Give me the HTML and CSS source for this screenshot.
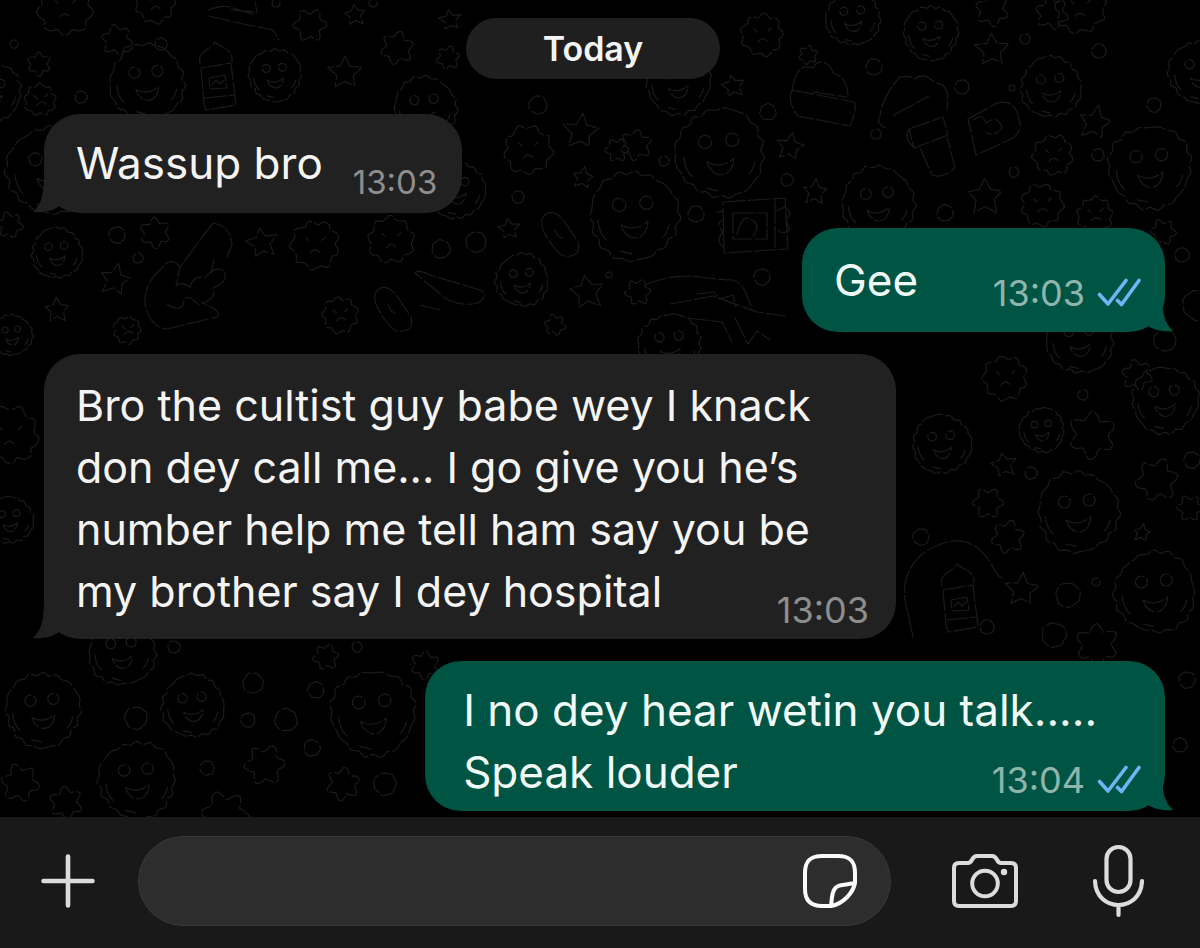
FILE: index.html
```html
<!DOCTYPE html>
<html lang="en">
<head>
  <meta charset="utf-8">
  <meta name="viewport" content="width=device-width, initial-scale=1">
  <title>Chat</title>
  <link rel="stylesheet" href="styles.css">
</head>
<body>
  <svg class="sprite" aria-hidden="true">
    <symbol id="tail" viewBox="0 0 34 40">
      <path d="M11 0C11 20 9 31 0 39C10 40 20 38 26 33L34 28V0Z"/>
    </symbol>
    <symbol id="ticks" viewBox="0 0 44 30">
      <path d="M2.500 16.500L11 26L29 2.500M20.500 22.500L24.500 26.500L42 2.500" fill="none" stroke="currentColor" stroke-width="3.600" stroke-linecap="round" stroke-linejoin="round"/>
    </symbol>
  </svg>

  <main class="chat">
    <svg class="wallpaper" viewBox="0 0 1200 817" preserveAspectRatio="xMidYMin slice" aria-hidden="true"></svg>

    <div class="day">Today</div>

    <article class="bubble bubble--in bubble--short">
      <p class="text">Wassup bro <span class="meta meta--small"><time>13:03</time></span></p>
      <svg class="tail" aria-hidden="true"><use href="#tail"/></svg>
    </article>

    <article class="bubble bubble--out bubble--reply">
      <p class="text">Gee <span class="meta"><time>13:03</time><svg class="ticks" role="img" aria-label="Read"><use href="#ticks"/></svg></span></p>
      <svg class="tail" aria-hidden="true"><use href="#tail"/></svg>
    </article>

    <article class="bubble bubble--in bubble--long">
      <p class="text">Bro the cultist guy babe wey I knack don dey call me... I go give you he’s number help me tell ham say you be my brother say I dey hospital <span class="meta"><time>13:03</time></span></p>
      <svg class="tail" aria-hidden="true"><use href="#tail"/></svg>
    </article>

    <article class="bubble bubble--out bubble--last">
      <p class="text">I no dey hear wetin you talk.....<br>Speak louder <span class="meta"><time>13:04</time><svg class="ticks" role="img" aria-label="Read"><use href="#ticks"/></svg></span></p>
      <svg class="tail" aria-hidden="true"><use href="#tail"/></svg>
    </article>
  </main>

  <form class="composer">
    <button class="icon-button" type="button" aria-label="Attach">
      <svg width="56" height="56" viewBox="0 0 56 56" stroke-width="4.600"><path d="M28 3.500V52.500M3.500 28H52.500"/></svg>
    </button>
    <div class="field">
      <input class="field-input" type="text" aria-label="Message">
      <button class="icon-button icon-button--bright" type="button" aria-label="Stickers">
        <svg width="56" height="56" viewBox="0 0 56 56" stroke-width="4"><path d="M29 53H20C8 53 3 47 3 36V20C3 8 8 3 20 3H36C48 3 53 8 53 20V30C51 40 41 51 29 53C30 46 29.500 42 32 37C35 31 43 32 53 30"/></svg>
      </button>
    </div>
    <button class="icon-button" type="button" aria-label="Camera">
      <svg width="68" height="58" viewBox="0 0 68 58" stroke-width="4"><path d="M8 11H17C22 11 20 4 26 4H41C47 4 45 11 50 11H60Q65 11 65 16V49Q65 54 60 54H8Q3 54 3 49V16Q3 11 8 11Z"/><circle cx="34" cy="31.500" r="12.800"/><circle class="dot" cx="53" cy="20" r="3.200"/></svg>
    </button>
    <button class="icon-button" type="button" aria-label="Record voice message">
      <svg width="52" height="74" viewBox="0 0 52 74" stroke-width="4.200"><rect x="14.500" y="3" width="24" height="45" rx="12"/><path d="M3 37C4 69 49 69 50 37M26.500 61V71"/></svg>
    </button>
  </form>
  <script src="wallpaper.js"></script>
</body>
</html>
```
FILE: styles.css
```css
* { box-sizing: border-box; }

body {
  margin: 0;
  min-height: 100vh;
  display: flex;
  flex-direction: column;
  background: #000;
  color: #f4f4f4;
  font-family: Inter, "Liberation Sans", sans-serif;
}

.sprite { position: absolute; width: 0; height: 0; }

.chat {
  position: relative;
  flex: 1;
  display: flex;
  flex-direction: column;
  align-items: flex-start;
  padding: 18px 35px 6px 44px;
}

.wallpaper {
  position: absolute;
  inset: 0;
  width: 100%;
  height: 100%;
  fill: none;
  stroke: #1b1b1b;
  stroke-width: 1.200;
  stroke-dasharray: 22 3;
  stroke-linecap: round;
  stroke-linejoin: round;
}

.day {
  position: relative;
  align-self: center;
  margin: 0 23px 35px 0;
  padding: 0 77px;
  border-radius: 31px;
  background: #1f1f1f;
  font-size: 34px;
  font-weight: 600;
  line-height: 61px;
}

.bubble {
  position: relative;
  border-radius: 36px;
  font-size: 44px;
  line-height: 62px;
}

.bubble--in { background: #212121; color: #f4f4f4; }
.bubble--out { align-self: flex-end; background: #005444; color: #f0faf7; }

.bubble--short { margin-bottom: 15px; padding: 18px 25px 19px 32px; }
.bubble--reply { width: 363px; margin-bottom: 22px; padding: 21px 24px 21px 32px; }
.bubble--long { width: 76%; margin-bottom: 22px; padding: 20px 27px 17px 32px; font-size: 43px; }
.bubble--last { width: 66%; padding: 18px 24px 8px 38px; }

.text { margin: 0; }

.meta {
  float: right;
  display: flex;
  align-items: center;
  gap: 12px;
  margin-top: 26px;
  font-size: 36px;
  line-height: 36px;
  color: #8e8e8e;
}

.bubble--short .meta,
.bubble--long .meta { margin: 32px 0 -6px 30px; }
.bubble--last .meta { margin-top: 21px; }
.bubble--out .meta { color: #8fb5ac; }
.meta--small { font-size: 33px; }

.ticks { width: 44px; height: 30px; color: #71b4f3; }

.tail {
  position: absolute;
  bottom: 0;
  left: -11px;
  width: 34px;
  height: 40px;
  fill: #212121;
}

.bubble--out .tail {
  left: auto;
  right: -8px;
  fill: #005444;
  transform: scaleX(-1);
}

.composer {
  position: relative;
  display: flex;
  align-items: center;
  padding: 19px 60px 22px 40px;
  background: #191919;
}

.field {
  flex: 1;
  display: flex;
  align-items: center;
  height: 90px;
  margin: 0 60px 0 42px;
  padding: 0 32px;
  border: 1px solid #383838;
  border-radius: 45px;
  background: #2d2d2d;
}

.field-input {
  flex: 1;
  min-width: 0;
  height: 60px;
  border: 0;
  outline: 0;
  background: transparent;
  color: inherit;
  font: inherit;
  font-size: 40px;
}

.icon-button {
  display: flex;
  padding: 0;
  border: 0;
  background: none;
  color: #dcdcdc;
}

.icon-button--bright { color: #fafafa; }

.icon-button svg {
  fill: none;
  stroke: currentColor;
  stroke-linecap: round;
  stroke-linejoin: round;
}

.icon-button .dot { fill: currentColor; stroke: none; }

.composer > .icon-button:last-child { margin-left: 73px; }
```
FILE: wallpaper.js
```js
const svg = document.querySelector(".wallpaper");

function ring(r, bumps, depth, seed) {
  const pts = [];
  for (let i = 0; i <= 72; i++) {
    const a = (i / 72) * Math.PI * 2;
    const k = r * (1 + depth * Math.sin(bumps * a + seed) + 0.03 * Math.sin(3 * a + seed * 2) + 0.02 * Math.sin(19 * a));
    pts.push((Math.cos(a) * k).toFixed(1) + " " + (Math.sin(a) * k).toFixed(1));
  }
  return "M" + pts.join("L");
}

function star(r, seed) {
  const pts = [];
  for (let i = 0; i < 10; i++) {
    const a = (i / 10) * Math.PI * 2 - 1.57 + 0.2 * Math.sin(seed);
    const k = i % 2 ? r * 0.5 : r * (1 + 0.08 * Math.sin(seed + i));
    pts.push((Math.cos(a) * k).toFixed(1) + " " + (Math.sin(a) * k).toFixed(1));
  }
  return "M" + pts.join("L") + "Z";
}

const dot = (x, y, r) => `M${x - r} ${y}a${r} ${r} 0 1 0 ${2 * r} 0a${r} ${r} 0 1 0 ${-2 * r} 0`;

const shapes = {
  face: (r, s) => ring(r, 16, 0.03, s) + dot(-r * 0.34, -r * 0.25, r * 0.15) + dot(r * 0.28, -r * 0.3, r * 0.15) +
    `M${-r * 0.3} ${r * 0.2}Q0 ${r * 0.38} ${r * 0.32} ${r * 0.12}Q${r * 0.28} ${r * 0.5} 0 ${r * 0.5}Q${-r * 0.22} ${r * 0.46} ${-r * 0.3} ${r * 0.2}` +
    `M${-r * 0.82} ${r * 0.1}q${r * 0.03} ${r * 0.3} ${r * 0.2} ${r * 0.45}M${r * 0.8} ${r * 0.2}q${-r * 0.05} ${r * 0.2} ${-r * 0.15} ${r * 0.28}M${-r * 0.3} ${r * 0.8}l${r * 0.25} ${r * 0.06}`,
  cookie: (r, s) => ring(r, 9, 0.09, s) + `M${-r * 0.4} ${-r * 0.3}l3 3M${r * 0.3} ${-r * 0.2}l3 -3M${-r * 0.2} ${r * 0.35}q4 -6 9 -1`,
  flower: (r, s) => ring(r, 6, 0.2, s),
  circle: (r, s) => ring(r, 7, 0.03, s),
  star: (r, s) => star(r, s),
  bottle: () => "M-17 -14C-20 -28 -7 -27 -2 -36C4 -30 16 -30 15 -17M-16 -10L14 -15L19 27Q3 30 -11 32L-13 25ZM-13 20L18 17M-8 0L8 -3L10 10L-7 11ZM-5 7l4 -5l4 4l4 -4",
  cupcake: () => "M-31 -5C-27 -25 -22 -31 -10 -27C-5 -38 8 -32 10 -22Q24 -18 25 0M-31 -5L31 7Q35 12 27 31L-25 21Q-36 8 -31 -5M-10 -3L24 2",
  cone: () => "M-29 3Q-40 -2 -35 -9C-34 -22 -24 -39 -15 -48Q-5 -50 0 -46Q8 -54 20 -42Q36 -42 32 -16M-21 -10L14 -29M-6 4L28 -8L33 10L-1 23ZM5 23L17 50Q27 54 40 43L32 12M-6 4Q-12 14 0 23",
  slice: () => "M-26 -9L3 -25Q21 -30 25 -9Q30 6 13 13L-18 27ZM-20 -8Q-12 -16 -8 -5Q4 -14 8 0Q0 10 -8 4",
  film: () => "M-30 -23L32 -27L35 24L-29 28ZM-20 -12H14V14H-20ZM-16 10q4 -20 13 -16q12 5 3 17M22 -24V22M-36 -12Q-28 -18 -30 -5Q-38 -2 -30 7Q-38 15 -30 22M24 -14q10 -8 13 3q-6 8 0 15q-8 8 -13 -1",
  pill: () => "M-17 -18Q-8 -29 4 -14L18 7Q21 20 10 21Q2 24 -7 11Q-22 -8 -17 -18M-5 -5l3 6l4 2",
  hand: () => "M28 -52Q46 -49 47 -30L42 -18M28 -52Q18 -40 10 -28L-5 -8Q-14 -20 -24 -6Q-44 12 -39 33Q-34 52 -18 54L32 42Q38 36 17 28Q32 24 28 13Q44 7 39 -4Q30 -10 20 3Q9 -1 5 12M5 12Q-4 6 -9 11L-5 -8M-18 29Q-6 37 -2 30Q0 18 8 25L14 30M26 -2L29 -15",
  arc: () => "M-46 72Q-60 30 -30 7Q15 -21 38 22Q41 30 47 33M-46 72l4 20",
  plane: () => "M-35 -22Q-32 -26 -20 -20L30 -5Q40 0 28 8Q10 12 -5 3ZM-30 10l20 5",
  scrap: () => "M-45 4L-2 -4L42 12L70 16M-18 -6l17 -2l5 7l14 -4l3 12M-70 -15Q-40 -28 -8 -22L12 -20Q24 -22 31 -7L37 9M20 18l13 26l9 -13l13 9M-28 18l35 4l10 20",
  curl: () => "M-35 -2Q-20 -8 -10 -4L10 2M-34 4L0 12L30 18L36 28M-12 -2l26 2l-2 -10"
};

const items = {
  face: [[147,82,37],[275,75,26],[57,253,25],[-7,92,28],[425,108,31],[50,170,43],[457,190,28],[720,153,44],[634,216,44],[522,280,26],[678,82,32],[853,18,27],[931,33,27],[1051,87,30],[1150,167,41],[878,203,36],[1200,72,31],[942,444,29],[1042,430,22],[1078,512,40],[1155,592,40],[1165,400,33],[1080,340,33],[43,710,37],[193,706,31],[373,713,42],[122,652,33],[137,780,38],[10,520,23],[670,345,31],[12,335,20]],
  cookie: [[65,8,26],[155,3,19],[391,240,22],[315,245,23],[528,150,23],[762,35,20],[1080,8,24],[1053,155,19],[1042,205,20],[1095,215,17],[340,315,17],[10,435,27],[127,330,13],[40,100,15],[1005,378,21]],
  flower: [[117,40,13],[310,25,14],[397,48,14],[155,233,13],[10,225,11],[638,292,11],[636,145,13],[992,10,14],[1163,232,11],[1157,480,18],[1092,435,20],[1137,375,13],[988,503,13],[1008,537,14],[1097,645,18],[20,783,16],[265,765,17],[343,784,14],[66,803,14],[225,815,20],[326,657,11],[425,665,12],[1052,13,14],[1190,508,11],[448,58,10],[39,64,10],[555,325,9],[617,150,10],[808,55,8]],
  star: [[345,73,17],[115,280,16],[57,310,13],[262,243,16],[581,132,18],[583,178,11],[587,292,18],[509,229,11],[790,147,14],[815,192,13],[733,86,12],[992,50,17],[1095,123,17],[985,197,19],[1004,465,13],[1022,590,17],[1142,533,9],[355,15,11],[450,20,11]],
  circle: [[161,44,6],[14,44,4],[138,258,5],[117,235,8],[441,249,9],[476,242,10],[276,3,4],[373,3,4],[81,97,6],[538,105,9],[664,161,5],[768,112,8],[518,197,6],[696,214,8],[762,277,8],[787,180,6],[609,275,3],[874,67,8],[962,87,7],[1012,88,3],[876,134,5],[1014,172,5],[1098,155,6],[1025,39,5],[1099,51,7],[1154,105,7],[945,213,8],[1198,305,15],[1182,255,7],[1083,395,5],[1031,473,6],[921,537,8],[1068,595,12],[1096,582,4],[1054,635,12],[987,627,7],[136,718,11],[286,720,11],[385,784,11],[253,683,10],[248,720,7],[312,748,8],[207,768,7],[174,647,6],[316,690,8],[357,647,5],[1165,340,11],[1192,460,8],[1180,745,7],[1187,680,8]],
  bottle: [[217,78,1],[959,600,1]], cupcake: [[823,95,1]], cone: [[915,125,1]], slice: [[994,128,1]],
  film: [[753,225,1]], pill: [[560,235,1],[393,310,1]], hand: [[185,275,1]], arc: [[955,545,1]], plane: [[450,295,1]], scrap: [[715,300,1]], curl: [[243,12,1]]
};

let markup = "";
for (const [kind, list] of Object.entries(items)) {
  list.forEach(([x, y, r], i) => {
    markup += `<path transform="translate(${x} ${y})" d="${shapes[kind](r, i * 1.7)}"/>`;
  });
}
svg.innerHTML = markup;
```
